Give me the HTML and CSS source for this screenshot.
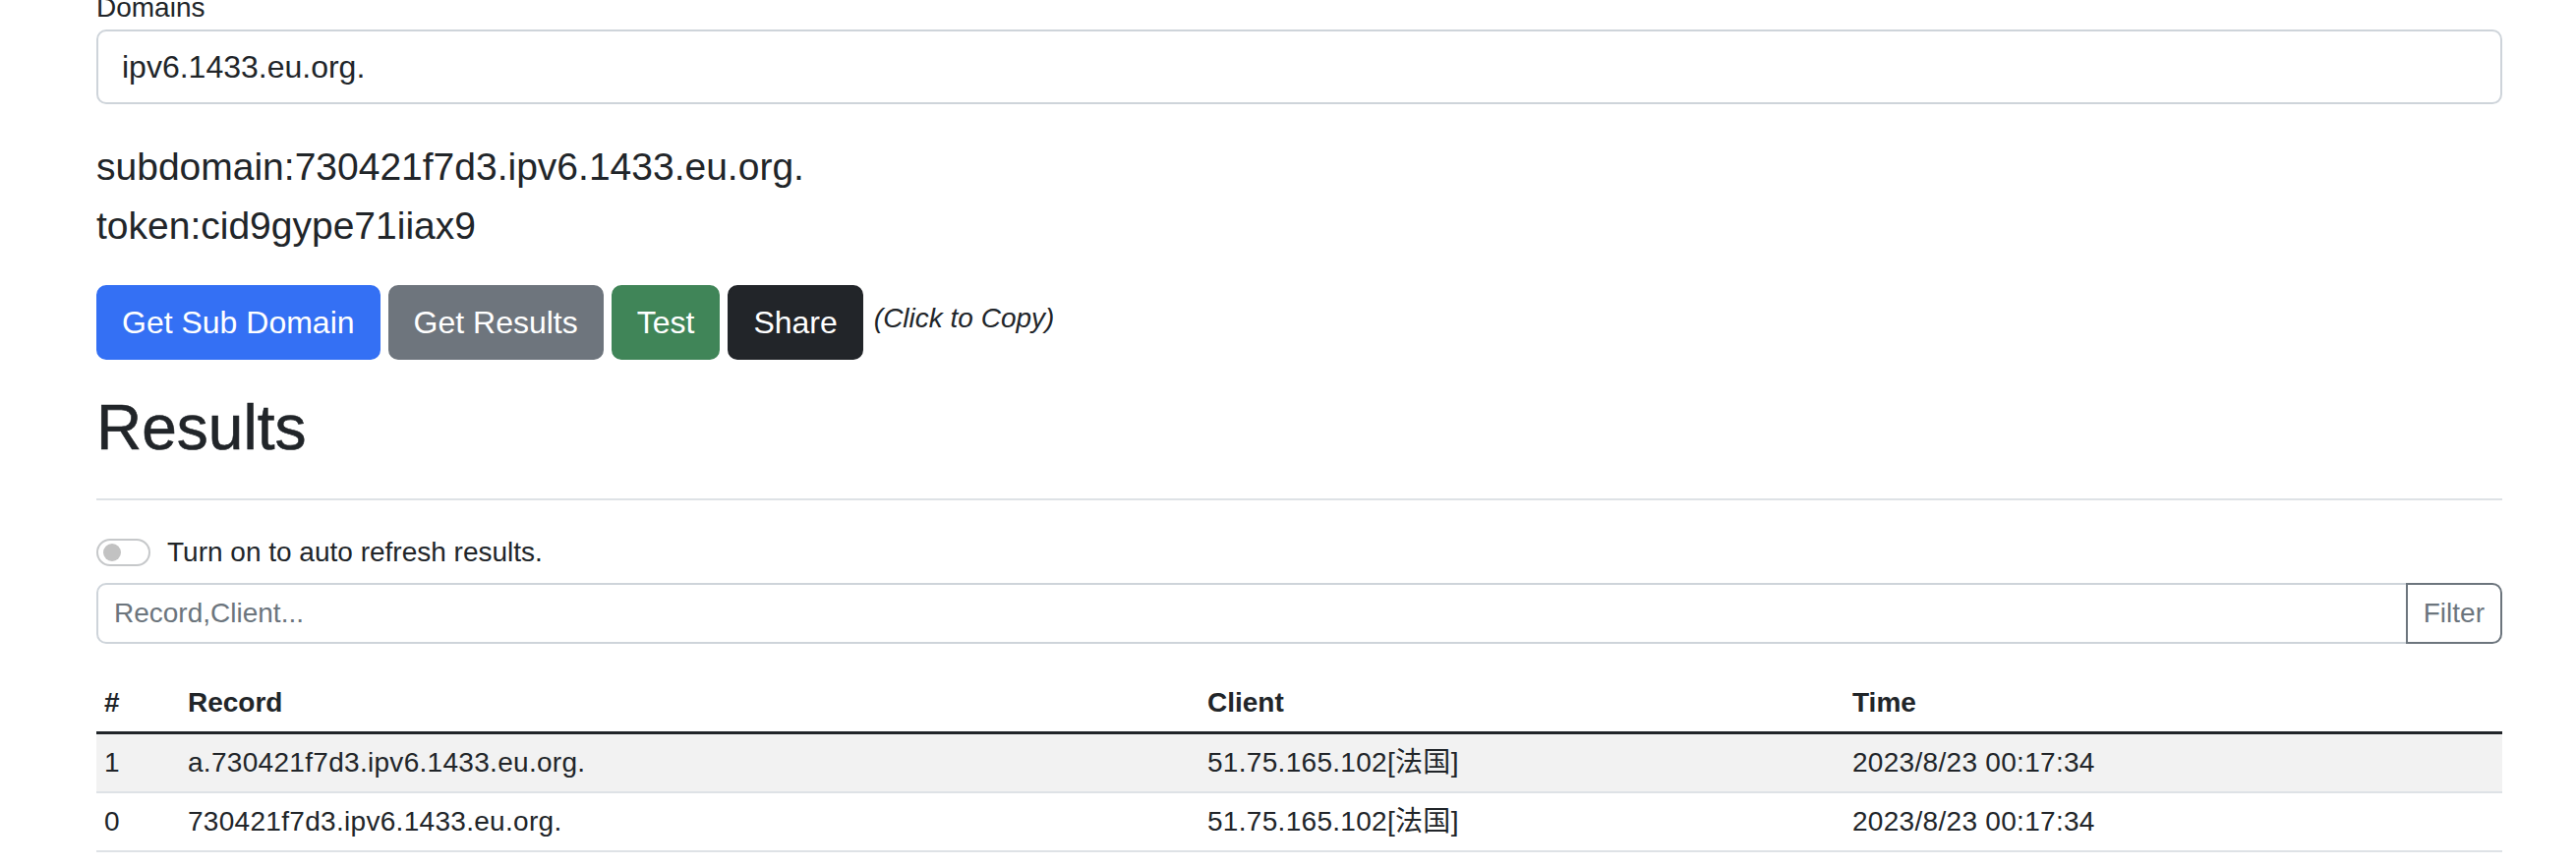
FILE: index.html
```html
<!DOCTYPE html>
<html lang="en">
<head>
<meta charset="utf-8">
<title>DNS Log</title>
<link rel="stylesheet" href="styles.css">
</head>
<body>
<main class="page">
  <label class="form-label" for="domains">Domains</label>
  <input id="domains" class="form-control" type="text" value="ipv6.1433.eu.org.">

  <div class="info">
    <div>subdomain:730421f7d3.ipv6.1433.eu.org.</div>
    <div>token:cid9gype71iiax9</div>
  </div>

  <div class="actions">
    <button class="btn btn-primary" type="button">Get Sub Domain</button>
    <button class="btn btn-secondary" type="button">Get Results</button>
    <button class="btn btn-success" type="button">Test</button>
    <button class="btn btn-dark" type="button">Share</button>
    <small class="hint">(Click to Copy)</small>
  </div>

  <h2 class="title">Results</h2>
  <hr class="divider">

  <div class="form-switch">
    <span class="switch-track"><span class="switch-knob"></span></span>
    <span class="switch-label">Turn on to auto refresh results.</span>
  </div>

  <div class="input-group">
    <input class="filter-input" type="text" placeholder="Record,Client...">
    <button class="btn-filter" type="button">Filter</button>
  </div>

  <table class="results">
    <colgroup>
      <col class="col-num">
      <col class="col-record">
      <col class="col-client">
      <col class="col-time">
    </colgroup>
    <thead>
      <tr><th>#</th><th>Record</th><th>Client</th><th>Time</th></tr>
    </thead>
    <tbody>
      <tr class="striped"><td>1</td><td>a.730421f7d3.ipv6.1433.eu.org.</td><td>51.75.165.102[法国]</td><td>2023/8/23 00:17:34</td></tr>
      <tr><td>0</td><td>730421f7d3.ipv6.1433.eu.org.</td><td>51.75.165.102[法国]</td><td>2023/8/23 00:17:34</td></tr>
    </tbody>
  </table>
</main>
</body>
</html>
```

FILE: styles.css
```css
html, body {
  margin: 0;
  padding: 0;
  background: #ffffff;
}

body {
  font-family: "Liberation Sans", Arial, "Noto Sans CJK SC", sans-serif;
  color: #212529;
}

.page {
  margin-top: -13px;
  padding: 0 75px 0 98px;
}

.form-label {
  display: block;
  font-size: 28px;
  line-height: 42px;
  margin-bottom: 1px;
}

.form-control {
  display: block;
  width: 100%;
  box-sizing: border-box;
  height: 76px;
  padding: 12px 24px;
  font-family: inherit;
  font-size: 32px;
  line-height: 48px;
  color: #212529;
  background: #fff;
  border: 2px solid #ced4da;
  border-radius: 10px;
  outline: none;
}

.info {
  margin-top: 34px;
  font-size: 39px;
  line-height: 60px;
}

.actions {
  margin-top: 30px;
  display: flex;
  align-items: center;
  gap: 8px;
}

.btn {
  font-family: inherit;
  font-size: 32px;
  line-height: 48px;
  padding: 12px 24px;
  border: 2px solid transparent;
  border-radius: 10px;
  color: #ffffff;
  cursor: pointer;
}

.btn-primary { background: #3470f4; border-color: #3470f4; }
.btn-secondary { background: #6e757d; border-color: #6e757d; }
.btn-success { background: #408558; border-color: #408558; }
.btn-dark { background: #222529; border-color: #222529; }

.hint {
  font-size: 28px;
  font-style: italic;
  margin-left: 3px;
  margin-top: -8px;
}

.title {
  margin: 31px 0 0;
  font-size: 64px;
  line-height: 1.2;
  font-weight: 500;
  -webkit-text-stroke: 0.6px #212529;
}

.divider {
  margin: 33px 0 32px;
  border: 0;
  border-top: 2px solid #dee2e6;
  height: 0;
}

.form-switch {
  display: flex;
  align-items: center;
  height: 42px;
  font-size: 28px;
  line-height: 42px;
}

.switch-track {
  box-sizing: border-box;
  width: 55px;
  height: 28px;
  border: 2px solid #c6c8ca;
  border-radius: 14px;
  display: flex;
  align-items: center;
  padding-left: 5px;
}

.switch-knob {
  width: 18px;
  height: 18px;
  border-radius: 50%;
  background: #c2c2c2;
}

.switch-label {
  margin-left: 17px;
}

.input-group {
  margin-top: 10px;
  display: flex;
}

.filter-input {
  flex: 1;
  min-width: 0;
  box-sizing: border-box;
  height: 62px;
  padding: 8px 16px;
  font-family: inherit;
  font-size: 28px;
  line-height: 42px;
  color: #212529;
  border: 2px solid #ced4da;
  border-radius: 10px 0 0 10px;
  outline: none;
}

.filter-input::placeholder {
  color: #6c757d;
}

.btn-filter {
  box-sizing: border-box;
  height: 62px;
  margin-left: -2px;
  padding: 8px 16px;
  font-family: inherit;
  font-size: 28px;
  line-height: 42px;
  color: #6c757d;
  background: #ffffff;
  border: 2px solid #6c757d;
  border-radius: 0 10px 10px 0;
}

.results {
  margin-top: 31px;
  width: 100%;
  table-layout: fixed;
  border-collapse: collapse;
  font-size: 28px;
  line-height: 42px;
}

.col-num { width: 85px; }
.col-record { width: 1037px; }
.col-client { width: 656px; }

.results th,
.results td {
  padding: 8px;
  text-align: left;
  white-space: nowrap;
}

.results th {
  font-weight: bold;
  border-bottom: 3px solid #212529;
}

.results td {
  border-bottom: 2px solid #dee2e6;
  letter-spacing: 0.3px;
}

.results .striped td {
  background: #f2f2f2;
}
```
